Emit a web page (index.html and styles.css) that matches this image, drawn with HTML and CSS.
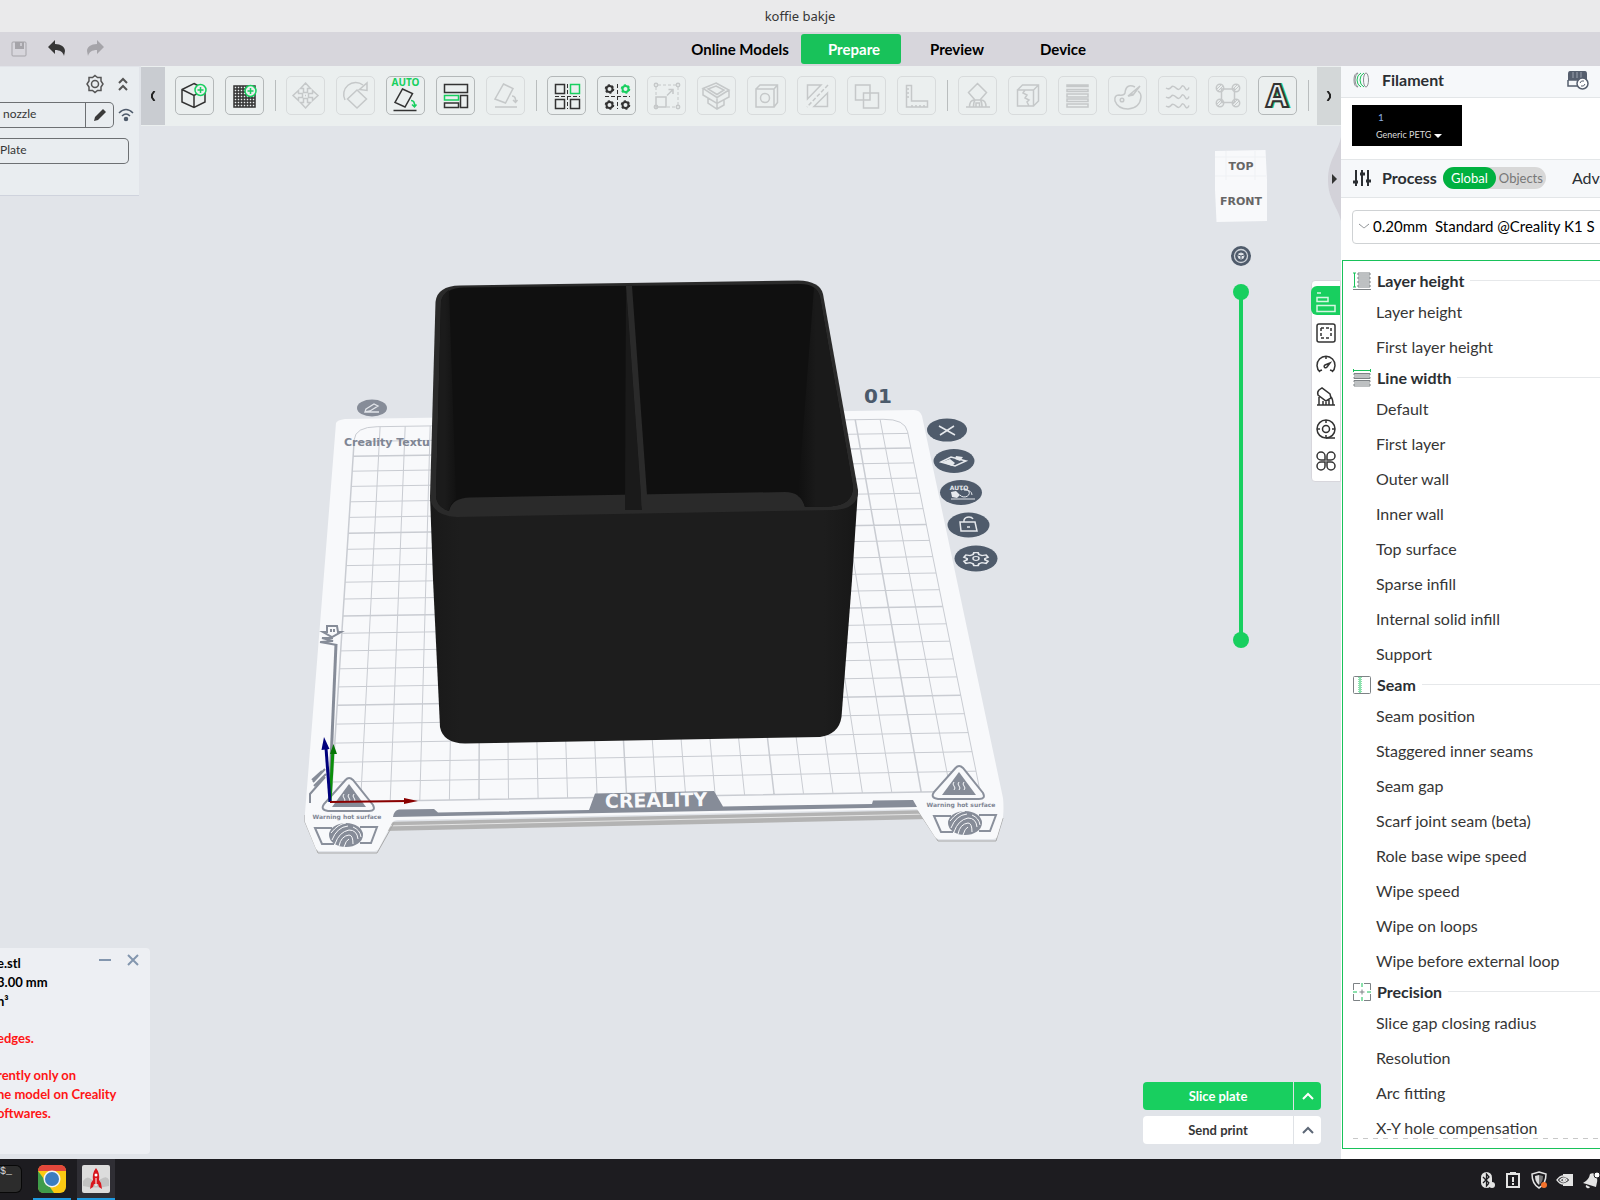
FILE: index.html
```html
<!DOCTYPE html>
<html lang="en">
<head>
    <meta charset="UTF-8">
    <meta name="viewport" content="width=device-width, initial-scale=1.0">
    <title>koffie bakje</title>
    <link rel="stylesheet" href="styles.css">
</head>
<body>

    <header class="titlebar">koffie bakje</header>

    <div class="menubar">
        <div class="quick">
            <button class="off" aria-label="Save">
                <svg viewBox="0 0 20 20" width="20" height="20"><rect x="3" y="3" width="14" height="14" rx="1" fill="none" stroke="currentColor"/><path d="M6 3h9v7H6z" fill="currentColor"/><path d="M12 4v3" stroke="#d7d6dc" stroke-width="1.5"/></svg>
            </button>
            <button aria-label="Undo">
                <svg viewBox="0 0 20 20" width="20" height="20"><path d="M1 8 8 1v4c6 0 10 3 10 7l-1 5c-1-4-4-6-9-6v4z" fill="currentColor"/></svg>
            </button>
            <button class="off" aria-label="Redo">
                <svg viewBox="0 0 20 20" width="20" height="20"><path d="M19 8 12 1v4C6 5 2 8 2 12l1 5c1-4 4-6 9-6v4z" fill="currentColor"/></svg>
            </button>
        </div>
        <nav class="tabs">
            <button class="tab wide">Online Models</button>
            <button class="tab active">Prepare</button>
            <button class="tab">Preview</button>
            <button class="tab">Device</button>
        </nav>
    </div>

    <div class="workspace">
        <main class="stage">
            <!-- Build plate and model -->
            <svg class="scene" viewBox="0 66 1341 1093" preserveAspectRatio="xMinYMin slice">
                <defs>
                    <linearGradient id="wallLeft" gradientUnits="userSpaceOnUse" x1="436" y1="0" x2="458" y2="0">
                        <stop offset="0.4" stop-color="#1b1b1b"/><stop offset="1" stop-color="#101010"/>
                    </linearGradient>
                    <linearGradient id="wallRight" gradientUnits="userSpaceOnUse" x1="798" y1="0" x2="816" y2="0">
                        <stop offset="0" stop-color="#101010"/><stop offset="1" stop-color="#1a1a1a"/>
                    </linearGradient>
                    <linearGradient id="front" gradientUnits="userSpaceOnUse" x1="430" y1="0" x2="858" y2="0">
                        <stop offset="0" stop-color="#191919"/><stop offset="0.07" stop-color="#1d1d1d"/>
                        <stop offset="0.92" stop-color="#1d1d1d"/><stop offset="1" stop-color="#171717"/>
                    </linearGradient>
                    <g id="hot">
                        <path d="M-3.500 -24 Q0 -28 4 -24 L24 1 Q27 7 20 7 L-21 7 Q-29 6 -25 0 Z" fill="#f8f9fb" stroke="#8a909c" stroke-width="2"/>
                        <path d="M0 -20 L17 3 H-17 Z" fill="#868c98"/>
                        <path d="M-5 -10q-2 2 0 4t0 4M0 -10q-2 2 0 4t0 4M5 -10q-2 2 0 4t0 4" fill="none" stroke="#f8f9fb"/>
                    </g>
                    <g id="finger">
                        <path d="M-14 -7 H-31 L-24 9 H-12 M14 -8 H31 L25 8 H14" fill="none" stroke="#8a909c" stroke-width="2"/>
                        <ellipse rx="17" ry="12" fill="#868c98"/>
                        <path d="M-14 5Q-9 -8 2 -9M-11 9Q-7 -3 3 -5Q11 -5 12 4M-7 11Q-5 1 3 0Q7 0 7 9M-2 12Q0 5 3 4M-15 -2Q-8 -11 0 -12M7 -8Q14 -5 15 2" fill="none" stroke="#f8f9fb"/>
                    </g>
                </defs>

                <!-- Plate edges -->
                <path d="M384 822 L930 810 V819 L384 831Z" fill="#b3b3b3"/>
                <path d="M384 826 L930 814" stroke="#e4e4e4" stroke-width="1"/>
                <path d="M305 815 V822 L318 853 H377 L394 823 M918 811 L938 841 H996 L1003 818" fill="none" stroke="#a9a9a9"/>
                <path d="M336 423 Q337 420 345 419 L914 410 Q920 410 922 416 L1003 798 Q1004 808 1003 817 L997 837 Q996 839 993 839 H939 Q936 839 935 837 L917 809 L398 820 Q394 820 392 823 L379 848 Q378 851 374 851 H320 Q317 851 316 849 L305 822 V813 Z" fill="#f8f9fb"/>
                <g id="grid" stroke="#c9ccd2" fill="none"></g>

                <!-- Plate markings -->
                <path d="M393 817 Q394 810 399 809.500 L434 809 L438 812.500 L589 810 L595 793.500 L714 791 L723 806.500 L872 804 L873 800.500 L913 800 L917 807 Z" fill="#868c98"/>
                <path d="M336 644 L330 785" stroke="#868c98" stroke-width="3"/>
                <path d="M320 642 L337 645 M327 626h10l1 6h3l-9 5-9-5h4z M331 629v3 M334 629v3 M321 642l12-1-11-3 11 0" fill="none" stroke="#868c98" stroke-width="2"/>
                <path d="M310 803 V794 L325 777 M313 782l12-13M314 786l12-12M312 780l10-9" fill="none" stroke="#868c98" stroke-width="2"/>
                <text x="344" y="446" class="plate-name">Creality Textu</text>
                <text x="656" y="807" class="plate-brand" transform="rotate(-1 656 801)">CREALITY</text>
                <use href="#hot" x="349" y="804"/>
                <use href="#hot" x="959" y="792"/>
                <text x="347" y="819" class="plate-warn">Warning hot surface</text>
                <text x="961" y="807" class="plate-warn">Warning hot surface</text>
                <use href="#finger" x="346" y="835"/>
                <use href="#finger" x="965" y="823"/>
                <ellipse cx="372" cy="408" rx="15" ry="8.500" fill="#868c98"/>
                <path d="M366 409l8-5 4 2-8 5-5 1zM366 412h13" fill="none" stroke="#e1e4e9" stroke-width="1.300"/>
                <text x="878" y="403" class="plate-no">01</text>

                <!-- Model -->
                <path d="M430 495 L433 580 L440 727 Q443 743 465 743.500 L820 737 Q839 734 841.500 717 L852 580 L858 490 Z" fill="url(#front)"/>
                <path d="M430 497 L435.500 302 Q437 286 460 285.500 L798 280.500 Q820 281 823 294 L858 490 Q859 508 835 510 L457 517 Q432 516 430 497 Z" fill="#2a2a2a"/>
                <path d="M441 302 Q443 288 465 287.500 L800 284 Q817 284 820 297 L853 487 Q853 505 830 506.500 L805 507 Q801 492 785 492 L470 497.500 Q452 498 449 511 Q436 507 436 495 Z" fill="#101010"/>
                <path d="M441 302 Q443 293 449 290 L456 499 Q450 503 449 511 Q436 507 436 495 Z" fill="url(#wallLeft)"/>
                <path d="M814 288 Q818 290 820 297 L853 487 Q853 505 830 506.500 L805 507 Q803 499 798 496 Z" fill="url(#wallRight)"/>
                <path d="M626 286 L625 510 H642 Z" fill="#1a1a1a"/>
                <path d="M626 286 H632 L647 495 V510 H642 Z" fill="#2a2a2a"/>

                <!-- Axes -->
                <path d="M330 802 L333 750" stroke="#0a8f0a" stroke-width="3"/>
                <path d="M330 754 L333.500 744 L337 754Z" fill="#067506"/>
                <path d="M330 802 L326 748" stroke="#00007c" stroke-width="3"/>
                <path d="M321.500 750 L324 737 L329.500 749Z" fill="#00007c"/>
                <path d="M330 802 L408 801" stroke="#8a0000" stroke-width="2"/>
                <path d="M404 798 L418 801 L404 804Z" fill="#8a0000"/>

                <!-- Plate buttons -->
                <g fill="#4f5b6b">
                    <ellipse cx="947" cy="430" rx="20" ry="11.500"/>
                    <ellipse cx="954" cy="461" rx="20.500" ry="12"/>
                    <ellipse cx="961" cy="492.500" rx="21" ry="12.500"/>
                    <ellipse cx="968.500" cy="525" rx="21" ry="12.500"/>
                    <ellipse cx="976" cy="558.500" rx="21.500" ry="13"/>
                </g>
                <g fill="none" stroke="#e6e9ed" stroke-width="1.500">
                    <path d="M939 426l16 9M954 426l-14 9"/>
                    <path d="M941 462l10-5 15 4-11 5z"/><path d="M942 462l8-3 5 4-3 3zM956 456l7 1-3 4-5-2z" fill="#e6e9ed" stroke="none"/>
                    <path d="M964 490q8 0 8 5M951 499h24M960 495a5 4 0 1 0 1-5" stroke-width="1"/><path d="M951 492l5-1 4 4-3 3-5-1z" fill="#e6e9ed" stroke="none"/>
                    <path d="M960 522h15l2 9h-16zM964 522v-2q1-3 5-3 3 0 4 2M967 527h3"/>
                    <g transform="translate(976 558.500) scale(1 .65)">
                        <path d="M-2 -9h4l1 3 3 1.500 4-1 2 3.500-3 2v2l3 2-2 3.500-4-1-3 1.500-1 3h-4l-1-3-3-1.500-4 1-2-3.500 3-2v-2l-3-2 2-3.500 4 1 3-1.500z" stroke-width="2"/>
                        <circle r="3"/>
                    </g>
                </g>
                <text x="959" y="490" class="auto-small">AUTO</text>

                <!-- View cube -->
                <path d="M1215 151 L1265.500 150 L1267 180 V221 L1216.500 222 L1215 190 Z" fill="#f8f9fb"/>
                <path d="M1215 157H1266M1215 176H1266M1226 151V180M1255 151V180" stroke="#eff1f4"/>
                <text x="1241" y="170" class="cube-text">TOP</text>
                <text x="1241" y="205" class="cube-text">FRONT</text>
                <g fill="none" stroke="#cfd4da">
                    <circle cx="1241" cy="256" r="10" fill="#4f5b6b" stroke="none"/>
                    <circle cx="1241" cy="256" r="6.500" stroke-width="1.300"/>
                    <circle cx="1241" cy="256" r="3" fill="#e6e9ed"/>
                    <path d="M1241 256v3M1241 256l-3-1M1241 256l3-1" stroke="#4f5b6b"/>
                </g>

                <!-- Sidebar handle -->
                <path d="M1341 137C1338 152 1328 160 1328 180S1338 207 1341 221Z" fill="#d3d2d9"/>
                <path d="M1332 174l5 5-5 5z" fill="#333"/>
            </svg>

            <div class="toolbar">
                <button class="grip left" aria-label="Collapse"><svg viewBox="0 0 6 10" width="6" height="10"><path d="M4.500 0 2 3.500v3L4.500 10"/></svg></button>
                <div class="tools">
                    <button class="tool" aria-label="Add model"><svg viewBox="0 0 39 39"><path d="M19 7.500 30 13.500V26L19 31.500 7 26V13.500zM7 13.500 19 19.500 30 13.500M19 19.500V31.500"/><circle cx="25.500" cy="14" r="5.500" class="badge"/><path d="M25.500 11v6M22.500 14h6" class="g"/></svg></button>
                    <button class="tool" aria-label="Add plate"><svg viewBox="0 0 39 39"><path d="M9 10h21v21H9zM12 10v21M15 10v21M18 10v21M21 10v21M24 10v21M27 10v21M9 13h21M9 16h21M9 19h21M9 22h21M9 25h21M9 28h21"/><circle cx="25.500" cy="15" r="5.500" class="badge"/><path d="M25.500 12v6M22.500 15h6" class="g"/></svg></button>
                    <span class="sep"></span>
                    <button class="tool" disabled aria-label="Move"><svg viewBox="0 0 39 39"><path d="M19.500 7l5 5.500h-3v4h-4v-4h-3zM19.500 32l5-5.500h-3v-4h-4v4h-3zM7 19.500l5.500-5v3h4v4h-4v3zM32 19.500l-5.500-5v3h-4v4h4v3zM19 19.500h1"/></svg></button>
                    <button class="tool" disabled aria-label="Rotate"><svg viewBox="0 0 39 39"><path d="M9 24A12 12 0 0 1 27 9M31 7v7.500l-7.500-1zM21 14l9.500 9-9.500 9-9.500-9z"/></svg></button>
                    <button class="tool" aria-label="Auto orient"><svg viewBox="0 0 39 39"><text x="19.500" y="10" class="auto">AUTO</text><path d="M16.500 13 26.500 17.500 19 31 9 26.500zM7.500 34.500h23"/><path d="M25 24.500q4 0 3.500 6M26 28.500l2.500 2.500 2-2.500" class="g"/></svg></button>
                    <button class="tool" aria-label="Arrange"><svg viewBox="0 0 39 39"><path d="M8.500 8.500h23v8h-23zM8.500 27h14v4.500h-14zM24.500 19.500h7v12h-7z"/><path d="M8.500 19.500h14V24h-14z" class="g"/></svg></button>
                    <button class="tool" disabled aria-label="Lay on face"><svg viewBox="0 0 39 39"><path d="M17.500 8 27 12.500 19.500 27 9 23zM9 31h22M26 20q4 0 3.500 6M27 24l2.500 2.500 2-2.500"/></svg></button>
                    <span class="sep"></span>
                    <button class="tool" aria-label="Split to objects"><svg viewBox="0 0 39 39"><path d="M8.500 8.500h9v9h-9zM8.500 23.500h9v9h-9zM23.500 23.500h9v9h-9z"/><path d="M23.500 8.500h9v9h-9z" class="g"/><path d="M20.500 8v25M8 20.500h25" stroke-dasharray="4 2" stroke-width="1"/></svg></button>
                    <button class="tool" aria-label="Split to parts"><svg viewBox="0 0 39 39"><g stroke-width="2"><circle cx="12.500" cy="13" r="3"/><circle cx="12.500" cy="29" r="3"/><circle cx="28.500" cy="29" r="3"/><circle cx="28.500" cy="13" r="3" class="g"/></g><g stroke-dasharray="2 2.190"><circle cx="12.500" cy="13" r="4"/><circle cx="12.500" cy="29" r="4"/><circle cx="28.500" cy="29" r="4"/><circle cx="28.500" cy="13" r="4" class="g"/></g><path d="M20.500 8v25M8 20.500h25" stroke-dasharray="4 2" stroke-width="1"/></svg></button>
                    <button class="tool" disabled aria-label="Scale"><svg viewBox="0 0 39 39"><path d="M11 9h18M31 11v18M9 11v8M20 31h9" stroke-dasharray="3 2" stroke-width="1"/><circle cx="9" cy="9" r="1.700"/><circle cx="31" cy="9" r="1.700"/><circle cx="31" cy="31" r="1.700"/><circle cx="9" cy="31" r="1.700"/><path d="M9 21h10v10H9zM20 19.500l6-6M21.500 13.500H26V18"/></svg></button>
                    <button class="tool" disabled aria-label="Hollow"><svg viewBox="0 0 39 39"><path d="M19 7 32 14 20 21.500 6 12.500zM6 12.500V19l14 8.500L32 21v-7M20 21.500v6M19 10l8 4-7 4.500-9-5.500zM11 22.500V27l9 6 7-4v-5M20 28v5"/></svg></button>
                    <button class="tool" disabled aria-label="Drill"><svg viewBox="0 0 39 39"><path d="M9 13h18v18H9zM9 13l4-4h17.500v17.500L27 31M27 13l3.500-4"/><circle cx="18" cy="22" r="4.500"/></svg></button>
                    <button class="tool" disabled aria-label="Cut"><svg viewBox="0 0 39 39"><path d="M24 9H10.500v14zM30.500 17v13.500H17z"/><path d="M31 9 10 31" stroke-dasharray="4 2"/></svg></button>
                    <button class="tool" disabled aria-label="Boolean"><svg viewBox="0 0 39 39"><path d="M8.500 9H23v15H8.500zM16.500 17h15v15h-15z"/></svg></button>
                    <button class="tool" disabled aria-label="Measure"><svg viewBox="0 0 39 39"><path d="M9.500 9.500h5V25h16v6h-21zM10 13h2M10 17h2M10 21h2M15 31v-2M19 31v-2M23 31v-2M27 31v-2"/></svg></button>
                    <span class="sep"></span>
                    <button class="tool" disabled aria-label="Support"><svg viewBox="0 0 39 39"><path d="M19.500 7.500 28.500 16.500 22 24h-5l-6.500-7.500zM8 31h24M11.500 31q0-7 5-7M28 31q0-7-5-7M15.500 31q0-5 1.500-7M24 31q0-5-1.500-7M18 31v-4h3.500v4"/></svg></button>
                    <button class="tool" disabled aria-label="Seam"><svg viewBox="0 0 39 39"><path d="M9.500 14h16v16h-16zM9.500 14l5-5h16v16l-5 5M25.500 14l5-5M17 14l-2 3 4 2-2 3 4 2-2 2 2 4"/></svg></button>
                    <button class="tool" disabled aria-label="Layers"><svg viewBox="0 0 39 39"><path d="M9 9h21v1.500H9zM9 13.500h21v2H9zM9 18h21v3H9zM9 23h21v2.500H9zM9 28h21v3H9z"/></svg></button>
                    <button class="tool" disabled aria-label="Paint"><svg viewBox="0 0 39 39"><path d="M27 11q-9-4-10 6-1 3-6 2-5 0-4 6 3 8 13 8 12-1 13-12 0-4-3-6M32 10 20 20l5-1zM21 20l4-2"/><circle cx="14" cy="24" r="1.800"/></svg></button>
                    <button class="tool" disabled aria-label="Fuzzy skin"><svg viewBox="0 0 39 39"><path d="M8 12q3 2 5-.500t5 .500 5-.500 4 .500 4-.500M8 21q3 2 5-.500t5 .500 5-.500 4 .500 4-.500M8 30q3 2 5-.500t5 .500 5-.500 4 .500 4-.500"/></svg></button>
                    <button class="tool" disabled aria-label="Brim ears"><svg viewBox="0 0 39 39"><path d="M13.500 13h13v13.500h-13z"/><circle cx="12" cy="12" r="3.700"/><circle cx="28" cy="12" r="3.700"/><circle cx="12" cy="27" r="3.700"/><circle cx="28" cy="27" r="3.700"/><path d="M9 13l4-4M10 15l5-5M25 13l4-4M26 15l5-5M9 28l4-4M10 30l5-5M25 28l4-4M26 30l5-5" stroke-width="1"/></svg></button>
                    <button class="tool" aria-label="Text"><svg viewBox="0 0 39 39"><text x="20" y="31" class="letter back">A</text><text x="19" y="31" class="letter">A</text></svg></button>
                    <span class="sep"></span>
                </div>
                <button class="grip right" aria-label="More tools"><svg viewBox="0 0 6 10" width="6" height="10"><path d="M1.500 0 4 3.500v3L1.500 10"/></svg></button>
            </div>

            <!-- Printer panel -->
            <section class="printer">
                <div class="printer-head">
                    <button aria-label="Printer settings"><svg viewBox="0 0 20 20" width="20" height="20"><path d="M10 1.500l2.500 2h3.500v3.500l2 3-2 3v3.500h-3.500l-2.500 2-2.500-2H4V13l-2-3 2-3V3.500h3.500z"/><circle cx="10" cy="10" r="3.500"/></svg></button>
                    <button aria-label="Fold"><svg viewBox="0 0 14 20" width="14" height="20"><path d="M3 9l4-4 4 4M3 16l4-4 4 4" stroke-width="2"/></svg></button>
                </div>
                <div class="printer-row">
                    <div class="field nozzle"><span>nozzle</span><button aria-label="Edit"><svg viewBox="0 0 16 16" width="16" height="16"><path d="M2 14l1-4 8-8 3 3-8 8z" fill="#3a3a3a" stroke="none"/></svg></button></div>
                    <svg class="wifi" viewBox="0 0 16 14" width="16" height="14"><path d="M1 5Q8-2 15 5M4 8q4-4 8 0"/><circle cx="8" cy="11" r="1.500" fill="#4f5b6b"/></svg>
                </div>
                <div class="field plate">Plate</div>
            </section>

            <div class="layer-slider">
                <input type="range" min="0" max="100" value="100" aria-label="Top layer">
                <input type="range" min="0" max="100" value="0" aria-label="Bottom layer">
            </div>

            <!-- Settings categories -->
            <div class="side-tabs">
                <button class="on" aria-label="Quality"><svg viewBox="0 0 20 20"><path d="M1 2h4M1 6.500h11v4H1zM1 14.500h18v6H1z" stroke-width="1.500"/></svg></button>
                <button aria-label="Strength"><svg viewBox="0 0 20 20"><rect x="1" y="1" width="18" height="18" rx="2"/><path d="M5 5h10M5 15h10M5 5v10M15 5v10" stroke-dasharray="3 2"/></svg></button>
                <button aria-label="Speed"><svg viewBox="0 0 20 20"><path d="M4 17A9 9 0 1 1 16 17M3 16l3-1M17 16l-3-1M14 8l-3 4a1.500 1.500 0 1 1-2-2zM10 2v2"/></svg></button>
                <button aria-label="Support"><svg viewBox="0 0 20 20"><path d="M2 8q-1-3 1-5l3-2 8 6 1 4-5 3zM1 18h18M3 18v-8M17 18q0-6-2-8M7 18v-4M10 18v-3M13 18v-5"/></svg></button>
                <button aria-label="Adhesion"><svg viewBox="0 0 20 20"><circle cx="10" cy="10" r="9"/><circle cx="10" cy="10" r="3.500"/><path d="M10 1v3M10 16v3M1 10h3M16 10h3M10 19h9"/></svg></button>
                <button aria-label="Others"><svg viewBox="0 0 20 20"><path d="M9 9H5a4 4 0 1 1 4-4zM11 9V5a4 4 0 1 1 4 4zM9 11v4a4 4 0 1 1-4-4zM11 11h4a4 4 0 1 1-4 4z"/></svg></button>
            </div>

            <!-- Model info -->
            <section class="info">
                <div class="info-actions">
                    <button aria-label="Minimise"><svg viewBox="0 0 12 12" width="12" height="12"><path d="M0 6h12"/></svg></button>
                    <button aria-label="Close"><svg viewBox="0 0 12 12" width="12" height="12"><path d="M1 1l10 10M11 1 1 11"/></svg></button>
                </div>
                <p>e.stl</p>
                <p>3.00 mm</p>
                <p>n³</p>
                <p class="warn gap">edges.</p>
                <p class="warn gap">rently only on</p>
                <p class="warn">ne model on Creality</p>
                <p class="warn">oftwares.</p>
            </section>

            <div class="actions">
                <div class="split primary">
                    <button class="main">Slice plate</button>
                    <button class="more" aria-label="Slice options"><svg viewBox="0 0 12 8" width="12" height="8"><path d="M1 7l5-5 5 5"/></svg></button>
                </div>
                <div class="split">
                    <button class="main">Send print</button>
                    <button class="more" aria-label="Print options"><svg viewBox="0 0 12 8" width="12" height="8"><path d="M1 7l5-5 5 5"/></svg></button>
                </div>
            </div>
        </main>

        <aside class="sidebar">
            <div class="side-head filament">
                <svg viewBox="0 0 18 18" width="18" height="18" fill="none" stroke="#8b8f92"><path d="M5 2Q1 2 1 9t4 7Q2 14 2 9t3-7"/><path d="M8 2Q4 4 4 9t4 7M11 2Q7 4 7 9t4 7" stroke="#18c25a"/><ellipse cx="13" cy="9" rx="2.500" ry="7"/></svg>
                <h2>Filament</h2>
                <button class="sync" aria-label="Sync filament"><svg viewBox="0 0 22 20" width="22" height="20"><path d="M2 1h16q2 0 2 3v6H1V4q0-3 2-3z" fill="#565f6e"/><path d="M6 2v6M10 2v6M14 2v6" stroke="#9aa2ad"/><path d="M1 10v6h10M1 10h19" stroke="#565f6e" stroke-width="1.500" fill="none"/><circle cx="15.500" cy="13.500" r="5.500" fill="#fff" stroke="#565f6e" stroke-width="1.500"/><path d="M13 13q1-3 4-2M18 14q-1 3-4 2" stroke="#565f6e" fill="none"/></svg></button>
            </div>
            <div class="spools">
                <button class="spool"><span class="slot">1</span><span>Generic PETG <i class="caret"></i></span></button>
            </div>
            <div class="side-head process">
                <svg viewBox="0 0 18 18" width="18" height="18" fill="none" stroke="#2b2f33" stroke-width="2"><path d="M3 1v16M9 1v16M15 1v16"/><path d="M0 13h5M7 5h5M13 12h5" stroke-width="3"/></svg>
                <h2>Process</h2>
                <div class="toggle">
                    <button class="on">Global</button>
                    <button>Objects</button>
                </div>
                <span class="adv">Advanced</span>
            </div>
            <div class="preset">
                <svg viewBox="0 0 12 8" width="12" height="8" fill="none" stroke="#8b8f92"><path d="M1 2q5 4 5 4t5-4"/></svg>
                <select aria-label="Process preset">
                    <option>0.20mm&nbsp; Standard @Creality K1 S</option>
                </select>
            </div>

            <div class="params">
                <h3><svg viewBox="0 0 18 18" width="18" height="18"><path d="M5 1h12v2H5zM5 5h12v2H5zM5 9h12v2H5zM5 13h12v2H5zM0 17.500h18"/><path d="M0 1h3M1.500 1v14M0 15h3" class="g"/></svg>Layer height</h3>
                <ul>
                    <li>Layer height</li>
                    <li>First layer height</li>
                </ul>
                <h3><svg viewBox="0 0 18 18" width="18" height="18"><path d="M1 4.500h16v1.500H1zM1 8h16v1.500H1zM1 11.500h16V13H1zM1 15h16v2H1z"/><path d="M.500 0v3M.500 1.500h17M17.500 0v3" class="g"/></svg>Line width</h3>
                <ul>
                    <li>Default</li>
                    <li>First layer</li>
                    <li>Outer wall</li>
                    <li>Inner wall</li>
                    <li>Top surface</li>
                    <li>Sparse infill</li>
                    <li>Internal solid infill</li>
                    <li>Support</li>
                </ul>
                <h3><svg viewBox="0 0 18 18" width="18" height="18"><rect x=".500" y=".500" width="17" height="17" rx="1"/><path d="M6 1v16M8 1v16" class="g" stroke-dasharray="1 1"/><path d="M7 2v16" class="g" stroke-dasharray="1 1"/></svg>Seam</h3>
                <ul>
                    <li>Seam position</li>
                    <li>Staggered inner seams</li>
                    <li>Seam gap</li>
                    <li>Scarf joint seam (beta)</li>
                    <li>Role base wipe speed</li>
                    <li>Wipe speed</li>
                    <li>Wipe on loops</li>
                    <li>Wipe before external loop</li>
                </ul>
                <h3><svg viewBox="0 0 18 18" width="18" height="18"><path d="M7 .500H.500V7M11 .500h6.500V7M7 17.500H.500V11M11 17.500h6.500V11M9 6.500v5M6.500 9h5"/><path d="M9 0v4M9 14v4M0 9h4M14 9h4" class="g"/></svg>Precision</h3>
                <ul>
                    <li>Slice gap closing radius</li>
                    <li>Resolution</li>
                    <li>Arc fitting</li>
                    <li>X-Y hole compensation</li>
                </ul>
                <div class="more-line"></div>
            </div>
        </aside>
    </div>

    <footer class="taskbar">
        <button class="app term" aria-label="Terminal">$_</button>
        <button class="app open" aria-label="Chrome">
            <svg viewBox="0 0 30 30" width="30" height="30"><rect x="1" y="1" width="28" height="28" rx="6" fill="#fbc912"/><path d="M1 7q0-6 6-6h16q6 0 6 6H15z" fill="#e2473b"/><path d="M1 7l9 12 7 10H7q-6 0-6-6z" fill="#3f9c4a"/><circle cx="15" cy="15" r="8.500" fill="#f4f4f4"/><circle cx="15" cy="15" r="7" fill="#3b7dc0"/></svg>
        </button>
        <button class="app open current" aria-label="Slicer">
            <svg viewBox="0 0 30 30" width="30" height="30"><rect x="1" y="1" width="28" height="28" rx="2" fill="#dcdcdc"/><path d="M2 17q4-6 8-2t10 0 8 1v6q-13 3-26 0z" fill="#c2c2c2"/><path d="M15 4q4 5 3 12l2 3 1 6-3-2-1-3h-4l-1 3-3 2 1-6 2-3Q11 9 15 4z" fill="#d8161d"/><circle cx="15" cy="11" r="1.500" fill="#fff"/><path d="M15 14v8" stroke="#fff"/></svg>
        </button>
        <div class="tray">
            <svg viewBox="0 0 18 18" width="18" height="18"><rect x="3" y="1" width="11" height="16" rx="5.500" fill="#e4e4e4"/><path d="M5 6l6 6-2.500 3V3L11 6l-6 6" fill="none" stroke="#1d1c20" stroke-width="1.300"/><circle cx="14" cy="14" r="3" fill="#e4e4e4"/></svg>
            <svg viewBox="0 0 18 18" width="18" height="18"><path d="M3 3h12v13H3z" fill="none" stroke="#e4e4e4" stroke-width="2"/><path d="M6 1h6v3H6z" fill="#e4e4e4"/><path d="M9 6v5M9 12v2" stroke="#e4e4e4" stroke-width="2"/></svg>
            <svg viewBox="0 0 18 18" width="18" height="18"><path d="M9 1l7 2q0 10-7 14Q2 13 2 3z" fill="none" stroke="#e4e4e4" stroke-width="1.500"/><path d="M9 4l4 1q0 6-4 9z" fill="#777"/><path d="M9 4 5 5q0 6 4 9z" fill="#ddd"/><circle cx="14" cy="14" r="3" fill="#f4722b"/></svg>
            <svg viewBox="0 0 18 18" width="18" height="18"><path d="M7 3h10v12H7z" fill="#e4e4e4"/><path d="M1 9q6-8 13 0-7 8-13 0zM4 9q4-4 7 0-4 4-7 0z" fill="#1d1c20" stroke="#e4e4e4" stroke-width="1.300"/><circle cx="8" cy="9" r="1.500" fill="#e4e4e4"/></svg>
            <svg viewBox="0 0 18 18" width="18" height="18"><path d="M1 12q6-3 7-9 4-2 7 2 1 5-1 11zM8 16a2 2 0 1 1-4-2z" fill="#e4e4e4"/><circle cx="15" cy="4" r="3" fill="#fff" stroke="#1d1c20"/></svg>
        </div>
    </footer>

    <script>
        // corners of the printable area: top left, top right, bottom right, bottom left
        const p = [[355, 427], [905, 419], [980, 791], [331, 802]];
        const cells = 22;

        // unit square -> quad
        const dx1 = p[1][0] - p[2][0], dx2 = p[3][0] - p[2][0], dx3 = p[0][0] - p[1][0] + p[2][0] - p[3][0];
        const dy1 = p[1][1] - p[2][1], dy2 = p[3][1] - p[2][1], dy3 = p[0][1] - p[1][1] + p[2][1] - p[3][1];
        const det = dx1 * dy2 - dx2 * dy1;
        const g = (dx3 * dy2 - dx2 * dy3) / det;
        const h = (dx1 * dy3 - dx3 * dy1) / det;

        function project(u, v) {
            const w = g * u + h * v + 1;
            const x = (p[1][0] * (1 + g) - p[0][0]) * u + (p[3][0] * (1 + h) - p[0][0]) * v + p[0][0];
            const y = (p[1][1] * (1 + g) - p[0][1]) * u + (p[3][1] * (1 + h) - p[0][1]) * v + p[0][1];
            return (x / w).toFixed(1) + ' ' + (y / w).toFixed(1);
        }

        let thin = '', bold = '';
        for (let i = 0; i <= cells; i++) {
            const t = i / cells;
            const a = i === 0 || i === cells ? 0.04 : 0;
            const col = 'M' + project(t, a) + 'L' + project(t, 1);
            const row = 'M' + project(i === cells ? 0.04 : 0, 1 - t) + 'L' + project(i === cells ? 0.96 : 1, 1 - t);
            if (i % 5 === 0) { bold += col + row; } else { thin += col + row; }
        }
        thin += 'M' + project(0, 0.04) + 'Q' + project(0, 0) + ' ' + project(0.04, 0);
        thin += 'M' + project(0.96, 0) + 'Q' + project(1, 0) + ' ' + project(1, 0.04);
        document.getElementById('grid').innerHTML =
            '<path d="' + thin + '"/><path d="' + bold + '" stroke-width="1.5"/>';
    </script>
</body>
</html>
```

FILE: styles.css
```css
* {
    box-sizing: border-box;
}
body {
    margin: 0;
    min-height: 100vh;
    display: flex;
    flex-direction: column;
    overflow: hidden;
    font-family: Lato, "Noto Sans", sans-serif;
    font-size: 16px;
    color: #363636;
    background: #e1e4e9;
}
button {
    font: inherit;
    color: inherit;
    background: none;
    border: 0;
    padding: 0;
    display: flex;
    align-items: center;
    justify-content: center;
}
h2, h3, p, ul {
    margin: 0;
    padding: 0;
}

/* top bars */
.titlebar {
    height: 32px;
    line-height: 32px;
    text-align: center;
    font-family: "Noto Sans", sans-serif;
    font-size: 13px;
    background: #eaeaeb;
}
.menubar {
    height: 34px;
    display: flex;
    background: #d7d6dc;
}
.quick {
    width: 685px;
    padding-left: 9px;
    display: flex;
    align-items: center;
    gap: 18px;
}
.quick .off {
    color: #a5a4a9;
}
.tabs {
    display: flex;
    align-items: center;
    gap: 6px;
}
.tab {
    width: 100px;
    height: 30px;
    padding-bottom: 1px;
    border-radius: 3px;
    font-weight: bold;
    font-size: 15px;
    color: #000;
}
.tab.wide {
    width: 110px;
}
.tab.active {
    background: #18c25a;
    color: #fff;
    padding-left: 6px;
}

.workspace {
    flex: 1;
    display: flex;
}
.stage {
    flex: 1;
    position: relative;
    overflow: hidden;
}
.scene {
    position: absolute;
    top: 0;
    left: 0;
    width: 100%;
    height: 100%;
}
.scene text {
    font-family: "DejaVu Sans", sans-serif;
    font-weight: bold;
    text-anchor: middle;
}
.scene .plate-name {
    font-size: 11px;
    text-anchor: start;
    fill: #7f8694;
}
.scene .plate-brand {
    font-size: 19px;
    fill: #f8f9fb;
}
.scene .plate-warn {
    font-size: 6px;
    fill: #7f8694;
}
.scene .plate-no {
    font-size: 20px;
    fill: #4b5a6b;
}
.scene .auto-small {
    font-size: 6px;
    fill: #e6e9ed;
}
.scene .cube-text {
    font-size: 11px;
    fill: #666;
}

/* toolbar */
.toolbar {
    position: relative;
    height: 60px;
    margin-left: 141px;
    display: flex;
    background: #ebefef;
}
.grip {
    width: 24px;
    height: 58px;
    margin-top: 1px;
    background: #c9ccd1;
}
.grip svg {
    fill: none;
    stroke: #222;
    stroke-width: 2;
}
.grip.right {
    background: #d3d7d8;
}
.tools {
    flex: 1;
    padding: 0 0 1px 10px;
    display: flex;
    align-items: center;
    gap: 11px;
}
.tool {
    width: 39px;
    height: 39px;
    border: 1px solid #b4b8b9;
    border-radius: 5px;
    color: #333;
}
.tool:disabled {
    border-color: #d8dbdc;
    color: #c5c8c9;
}
.tool svg {
    flex: none;
    width: 39px;
    height: 39px;
    fill: none;
    stroke: currentColor;
    stroke-width: 1.5;
}
.tool .g {
    stroke: #18cf5f;
}
.tool .badge {
    fill: #ebefef;
    stroke: #18cf5f;
}
.tool text {
    stroke: none;
    font-weight: bold;
    text-anchor: middle;
}
.tool .auto {
    fill: #18cf5f;
    font-family: "Noto Sans", sans-serif;
    font-size: 10px;
}
.tool .letter {
    font-family: "Noto Sans", sans-serif;
    font-size: 32px;
    fill: #ebefef;
    stroke: #333;
    stroke-width: 2;
}
.tool .letter.back {
    fill: #18cf5f;
    stroke: #18cf5f;
}
.sep {
    width: 1px;
    height: 31px;
    margin-right: -1px;
    background: #b9bdbe;
}

/* printer panel */
.printer {
    position: absolute;
    top: 1px;
    left: 0;
    width: 139px;
    height: 129px;
    background: #e9edf0;
    border-bottom: 1px solid #cfd3dd;
    font-size: 12px;
}
.printer svg {
    fill: none;
    stroke: #555;
    stroke-width: 1.5;
}
.printer-head {
    height: 35px;
    padding: 0 9px 2px 0;
    display: flex;
    align-items: center;
    justify-content: flex-end;
    gap: 11px;
}
.printer-row {
    display: flex;
    align-items: center;
    gap: 4px;
}
.field {
    height: 26px;
    border: 1px solid #6d7073;
    border-left: 0;
    line-height: 22px;
}
.nozzle {
    width: 114px;
    padding-left: 3px;
    border-radius: 0 5px 5px 0;
    display: flex;
    justify-content: space-between;
}
.nozzle button {
    width: 28px;
    border-left: 1px solid #6d7073;
}
.printer .wifi {
    stroke: #4f5b6b;
}
.plate {
    width: 129px;
    margin-top: 10px;
    border-radius: 0 5px 5px 0;
}

/* two thumbs on one track */
.layer-slider {
    position: absolute;
    top: 218px;
    right: 92px;
    width: 16px;
    height: 364px;
}
.layer-slider input {
    position: absolute;
    top: 0;
    left: 0;
    width: 16px;
    height: 364px;
    margin: 0;
    appearance: none;
    background: linear-gradient(#18cf5f, #18cf5f) center / 4px 348px no-repeat;
    writing-mode: vertical-lr;
    direction: rtl;
}
.layer-slider input::-webkit-slider-thumb {
    appearance: none;
    width: 16px;
    height: 16px;
    border-radius: 50%;
    background: #18cf5f;
}

.side-tabs {
    position: absolute;
    top: 214px;
    right: 0;
    width: 30px;
    height: 202px;
    padding-top: 5px;
    background: #fff;
    border: 1px solid #d7d6dc;
    border-radius: 4px 0 0 4px;
}
.side-tabs button {
    width: 29px;
    height: 32px;
    margin-left: -1px;
}
.side-tabs .on {
    height: 29px;
    margin-bottom: 2px;
    border-radius: 6px 0 0 6px;
    background: #18cf5f;
}
.side-tabs svg {
    width: 20px;
    height: 20px;
    fill: none;
    stroke: #333;
    stroke-width: 1.5;
    overflow: visible;
}
.side-tabs .on svg {
    stroke: #d5f7e2;
}

/* model info */
.info {
    position: absolute;
    left: 0;
    bottom: 5px;
    width: 150px;
    height: 206px;
    overflow: hidden;
    background: #edeff3;
    border-radius: 0 4px 4px 0;
    font-size: 13px;
    font-weight: bold;
    color: #000;
    padding-top: 6px;
}
.info p {
    margin-left: -3px;
    line-height: 19px;
    white-space: nowrap;
}
.info .warn {
    color: #ff1515;
}
.info .gap {
    margin-top: 18px;
}
.info-actions {
    position: absolute;
    top: 6px;
    right: 11px;
    display: flex;
    gap: 16px;
}
.info-actions svg {
    fill: none;
    stroke: #8396ae;
    stroke-width: 2;
}

.actions {
    position: absolute;
    right: 20px;
    bottom: 15px;
    width: 178px;
    display: flex;
    flex-direction: column;
    gap: 6px;
}
.split {
    height: 28px;
    display: flex;
    border-radius: 4px;
    background: #fff;
    font-size: 13px;
    font-weight: bold;
}
.split.primary {
    background: #18cf5f;
    color: #fff;
}
.split .main {
    flex: 1;
    padding-bottom: 1px;
}
.split .more {
    width: 28px;
    border-left: 1px solid #dfe2e6;
}
.split svg {
    fill: none;
    stroke: #5d6776;
    stroke-width: 2;
}
.split.primary svg {
    stroke: #fff;
}

/* sidebar */
.sidebar {
    width: 259px;
    overflow: hidden;
    background: #fff;
    display: flex;
    flex-direction: column;
}
.side-head {
    display: flex;
    align-items: center;
    padding: 0 0 2px 12px;
    background: #f6f8fa;
    border-bottom: 1px solid #e3e6e8;
    color: #2b2f33;
}
.side-head > * {
    flex: none;
}
.side-head h2 {
    margin-left: 11px;
    font-size: 16px;
}
.filament {
    height: 32px;
    padding-bottom: 4px;
}
.sync {
    margin-left: auto;
    margin-right: 11px;
}
.spools {
    height: 61px;
    padding: 7px 11px;
}
.spool {
    width: 110px;
    height: 41px;
    flex-direction: column;
    align-items: flex-start;
    gap: 4px;
    padding: 0 0 0 24px;
    background: #000;
    color: #ddd;
    font-size: 9px;
    line-height: 14px;
    white-space: nowrap;
}
.slot {
    padding-left: 2px;
    color: #8fb0e0;
    font-size: 10px;
}
.caret {
    display: inline-block;
    border: 4px solid transparent;
    border-top-color: #fff;
    border-bottom: 0;
}
.process {
    height: 39px;
    border-top: 1px solid #e3e6e8;
}
.toggle {
    display: flex;
    margin-left: 6px;
    border-radius: 12px;
    background: #d8d8d8;
    color: #777;
    font-size: 13px;
}
.toggle button {
    height: 22px;
    width: 50px;
}
.toggle .on {
    width: 53px;
    border-radius: 11px;
    background: #00b140;
    color: #fff;
}
.adv {
    margin-left: 26px;
}
.preset {
    width: 300px;
    height: 34px;
    margin: 12px 0 16px 11px;
    padding: 0 0 2px 5px;
    display: flex;
    align-items: center;
    border: 1px solid #cfd2d4;
    border-radius: 4px;
    font-size: 15px;
}
.preset select {
    flex: 1;
    padding: 0 0 0 3px;
    appearance: none;
    border: 0;
    background: none;
    font: inherit;
    color: #000;
}
.params {
    flex: 1;
    margin: 0 0 10px 1px;
    padding: 6px 0 0 10px;
    border: 1px solid #18c25a;
    border-right: 0;
}
.params h3 {
    height: 27px;
    display: flex;
    align-items: center;
    gap: 6px;
    font-size: 16px;
    color: #2b2f33;
}
.params h3::after {
    content: "";
    flex: 1;
    height: 1px;
    background: #e6e8ea;
}
.params h3 svg {
    fill: none;
    stroke: #7d8285;
}
.params .g {
    stroke: #18c25a;
}
.params li {
    height: 35px;
    line-height: 35px;
    padding-left: 23px;
    list-style: none;
}
.more-line {
    margin-top: -7px;
    height: 1px;
    background: repeating-linear-gradient(90deg, #c8c8c8 0 5px, transparent 5px 10px);
}

/* taskbar */
.taskbar {
    height: 41px;
    display: flex;
    background: #1d1c20;
}
.app {
    width: 38px;
    margin-right: 6px;
    border-bottom: 2px solid transparent;
}
.app.open {
    border-color: #1f9ae0;
}
.app.current {
    background: #2f2e34;
}
.app.term {
    width: 22px;
    height: 28px;
    margin: 6px 11px 0 0;
    justify-content: flex-start;
    align-items: flex-start;
    background: #2c2c2c;
    border: 1px solid #080808;
    border-left: 0;
    border-radius: 0 6px 6px 0;
    color: #ddd;
    font-family: "Liberation Mono", monospace;
    font-size: 10px;
}
.tray {
    margin-left: auto;
    display: flex;
    align-items: center;
    gap: 8px;
}
```
